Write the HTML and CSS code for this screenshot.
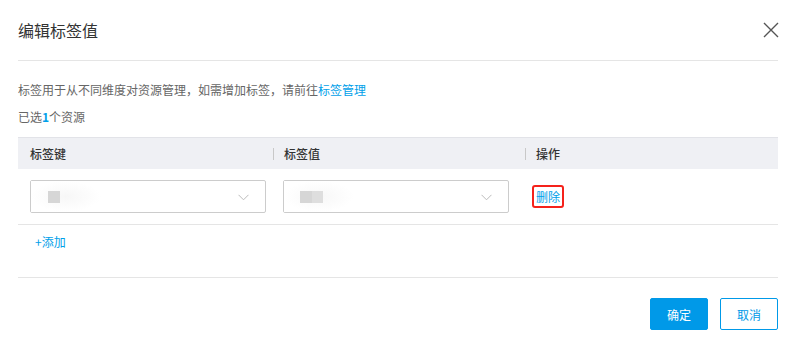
FILE: index.html
```html
<!DOCTYPE html>
<html>
	<head>
		<meta charset="UTF-8" />
		<title>编辑标签值</title>
		<link rel="stylesheet" href="styles.css">
	</head>
	<body>
		<div class="dialog">
			<div class="dialog-header">
				<span class="dialog-title">编辑标签值</span>
				<svg class="close" width="16" height="16" viewBox="0 0 16 16">
					<path d="M1 1 L15 15 M15 1 L1 15" stroke="#555" stroke-width="1.4" fill="none"/>
				</svg>
			</div>

			<p class="tip">标签用于从不同维度对资源管理，如需增加标签，请前往<a class="link">标签管理</a></p>
			<p class="selected">已选<b>1</b>个资源</p>

			<div class="tag-table">
				<div class="th">标签键</div>
				<div class="th sep">标签值</div>
				<div class="th sep">操作</div>

				<div class="td first">
					<div class="select key">
						<span class="blur"><i class="blk"></i></span>
						<svg class="arrow" width="11" height="7" viewBox="0 0 11 7"><path d="M0.5 0.8 L5.5 5.8 L10.5 0.8" stroke="#bbb" stroke-width="1" fill="none"/></svg>
					</div>
				</div>
				<div class="td second">
					<div class="select val">
						<span class="blur"><i class="blk"></i><i class="blk light"></i></span>
						<svg class="arrow" width="11" height="7" viewBox="0 0 11 7"><path d="M0.5 0.8 L5.5 5.8 L10.5 0.8" stroke="#bbb" stroke-width="1" fill="none"/></svg>
					</div>
				</div>
				<div class="td ops">
					<a class="del">删除</a>
				</div>
			</div>

			<div class="add-row"><a class="link">+添加</a></div>

			<div class="dialog-footer">
				<button class="btn primary">确定</button>
				<button class="btn">取消</button>
			</div>
		</div>
	</body>
</html>
```

FILE: styles.css
```css
* {
    box-sizing: border-box;
}

body {
    margin: 0;
    background: #fff;
    font-family: "Noto Sans CJK SC", "Liberation Sans", sans-serif;
    font-size: 12px;
    color: #666;
}

.dialog {
    width: 796px;
    padding: 0 18px;
}

.dialog-header {
    height: 61px;
    border-bottom: 1px solid #e5e5e5;
    display: flex;
    align-items: center;
    justify-content: space-between;
    padding-bottom: 1px;
}

.dialog-title {
    font-size: 16px;
    color: #333;
}

.close {
    margin-right: -1px;
}

.tip {
    margin: 20px 0 0;
    line-height: 18px;
}

.selected {
    margin: 9px 0 0;
    line-height: 18px;
}

.selected b {
    color: #00a0e9;
}

.link {
    color: #00a0e9;
    cursor: pointer;
}

.tag-table {
    margin-top: 11px;
    display: grid;
    grid-template-columns: 255px 252px 1fr;
    border-bottom: 1px solid #e5e5e5;
}

.th {
    height: 32px;
    background: #eff0f4;
    border-top: 1px solid #e2e3e8;
    display: flex;
    align-items: center;
    padding-left: 12px;
    color: #333;
    font-weight: 500;
}

.th.sep {
    padding-left: 0;
}

.th.sep::before {
    content: "";
    display: inline-block;
    width: 1px;
    height: 12px;
    background: #c8c8c8;
    margin-right: 10px;
}

.td {
    padding: 11px 0;
    display: flex;
    align-items: center;
}

.td.first {
    padding-left: 12px;
}

.td.second {
    padding-left: 10px;
}

.td.ops {
    padding-left: 7px;
}

.select {
    height: 33px;
    border: 1px solid #ccc;
    border-radius: 2px;
    display: flex;
    align-items: center;
    justify-content: space-between;
    padding: 0 16px 0 0;
}

.select.key {
    width: 236px;
}

.select.val {
    width: 226px;
}

.blur {
    display: flex;
    align-items: center;
    height: 31px;
    width: 70px;
    background: radial-gradient(ellipse at center, #f7f7f7 0%, #fff 70%);
    padding-left: 17px;
}

.select.val .blur {
    padding-left: 16px;
}

.blk {
    display: inline-block;
    width: 12px;
    height: 12px;
    background: #d6d6d6;
}

.blk.light {
    width: 11px;
    background: #dedede;
}

.arrow {
    margin-top: 1px;
}

.del {
    display: inline-block;
    border: 2px solid #f5221b;
    border-radius: 3px;
    padding: 1px 2px;
    line-height: 17px;
    color: #00a0e9;
    cursor: pointer;
}

.add-row {
    padding: 8px 0 0 17px;
    height: 53px;
    line-height: 18px;
    border-bottom: 1px solid #e5e5e5;
}

.dialog-footer {
    display: flex;
    justify-content: flex-end;
    gap: 12px;
    padding-top: 20px;
}

.btn {
    width: 58px;
    height: 32px;
    border: 1px solid #0099e8;
    border-radius: 2px;
    background: #fff;
    color: #0099e8;
    font-family: inherit;
    font-size: 12px;
    cursor: pointer;
}

.btn.primary {
    background: #0099e8;
    color: #fff;
}
```
